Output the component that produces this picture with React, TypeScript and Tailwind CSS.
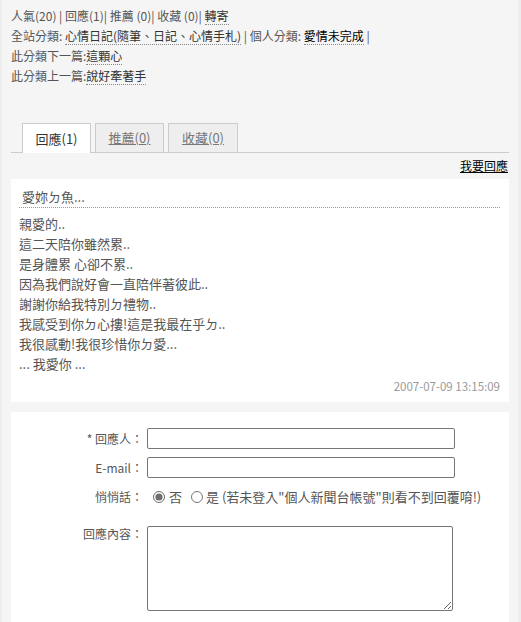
import React from "react";

const link = "text-[#333] border-b border-dotted border-[#888]";

export default function App() {
  const lines = [
    "親愛的..",
    "這二天陪你雖然累..",
    "是身體累 心卻不累..",
    "因為我們說好會一直陪伴著彼此..",
    "謝謝你給我特別ㄉ禮物..",
    "我感受到你ㄉ心摟!這是我最在乎ㄉ..",
    "我很感動!我很珍惜你ㄉ愛...",
    "... 我愛你 ...",
  ];
  return (
    <div
      className="w-[521px] min-h-[622px] bg-[#f5f5f5] border-l-[2px] border-r-[3px] border-[#ededed] text-[12px] leading-[20px] text-[#555]"
      style={{ fontFamily: '"Noto Sans CJK TC", "Noto Sans", sans-serif' }}
    >
      <div className="pl-[9px] pr-[9px]">
        <div className="pt-[6px]">
          <div>
            人氣(20) | 回應(1)| 推薦 (0)| 收藏 (0)| <span className={link}>轉寄</span>
          </div>
          <div>
            全站分類: <span className={link}>心情日記(隨筆、日記、心情手札)</span> | 個人分類:{" "}
            <span className="text-black border-b border-dotted border-[#888]">愛情未完成</span> |
          </div>
          <div>
            此分類下一篇:<span className={link}>這顆心</span>
          </div>
          <div>
            此分類上一篇:<span className={link}>說好牽著手</span>
          </div>
        </div>

        <div className="mt-[37px] flex items-end gap-[4px] border-b border-[#cccccc] pl-[11px] h-[30px]">
          <div className="w-[69px] h-[30px] -mb-px bg-white border border-b-0 border-[#cccccc] flex items-center justify-center text-[13px] text-[#333]">
            回應(1)
          </div>
          <div className="w-[69px] h-[29px] bg-[#eeeeee] border border-b-0 border-[#cccccc] flex items-center justify-center text-[13px] text-[#777] underline">
            推薦(0)
          </div>
          <div className="w-[70px] h-[29px] bg-[#eeeeee] border border-b-0 border-[#cccccc] flex items-center justify-center text-[13px] text-[#777] underline">
            收藏(0)
          </div>
        </div>

        <div className="flex justify-end pr-[1px] h-[26px] items-center">
          <span className="text-black underline">我要回應</span>
        </div>

        <div className="bg-white pl-[8px] pr-[9px] pt-[8px] pb-[6px] text-[13px]">
          <div className="pl-[3px] border-b border-dotted border-[#999] h-[21px]">愛妳ㄉ魚...</div>
          <div className="mt-[6px]">
            {lines.map((l, i) => (
              <div key={i}>{l}</div>
            ))}
          </div>
          <div className="text-right text-[#999] mt-[2px] text-[11.5px]">2007-07-09 13:15:09</div>
        </div>

        <div className="bg-white mt-[10px] pt-[16px] pb-[20px]">
          <div className="grid grid-cols-[132px_1fr] gap-x-[4px] items-center">
            <div className="text-right">* 回應人：</div>
            <div>
              <input className="w-[308px] h-[21px] border border-[#767676] rounded-[2px] bg-white" />
            </div>
            <div className="text-right mt-[8px]">E-mail：</div>
            <div className="mt-[8px]">
              <input className="w-[308px] h-[21px] border border-[#767676] rounded-[2px] bg-white" />
            </div>
            <div className="text-right mt-[9px]">悄悄話：</div>
            <div className="mt-[9px] flex items-center text-[13px]">
              <input type="radio" name="q" defaultChecked className="w-[12px] h-[12px] ml-[6px] mr-[4px] accent-[#6e6e6e]" />
              <span>否</span>
              <input type="radio" name="q" className="w-[12px] h-[12px] ml-[9px] mr-[3px] accent-[#6e6e6e]" />
              <span>是 (若未登入"個人新聞台帳號"則看不到回覆唷!)</span>
            </div>
            <div className="text-right self-start mt-[19px] leading-[14px] pt-[1px]">回應內容：</div>
            <div className="mt-[19px]">
              <textarea className="block w-[306px] h-[85px] border border-[#767676] rounded-[2px] bg-white" />
            </div>
          </div>
        </div>
      </div>
    </div>
  );
}
